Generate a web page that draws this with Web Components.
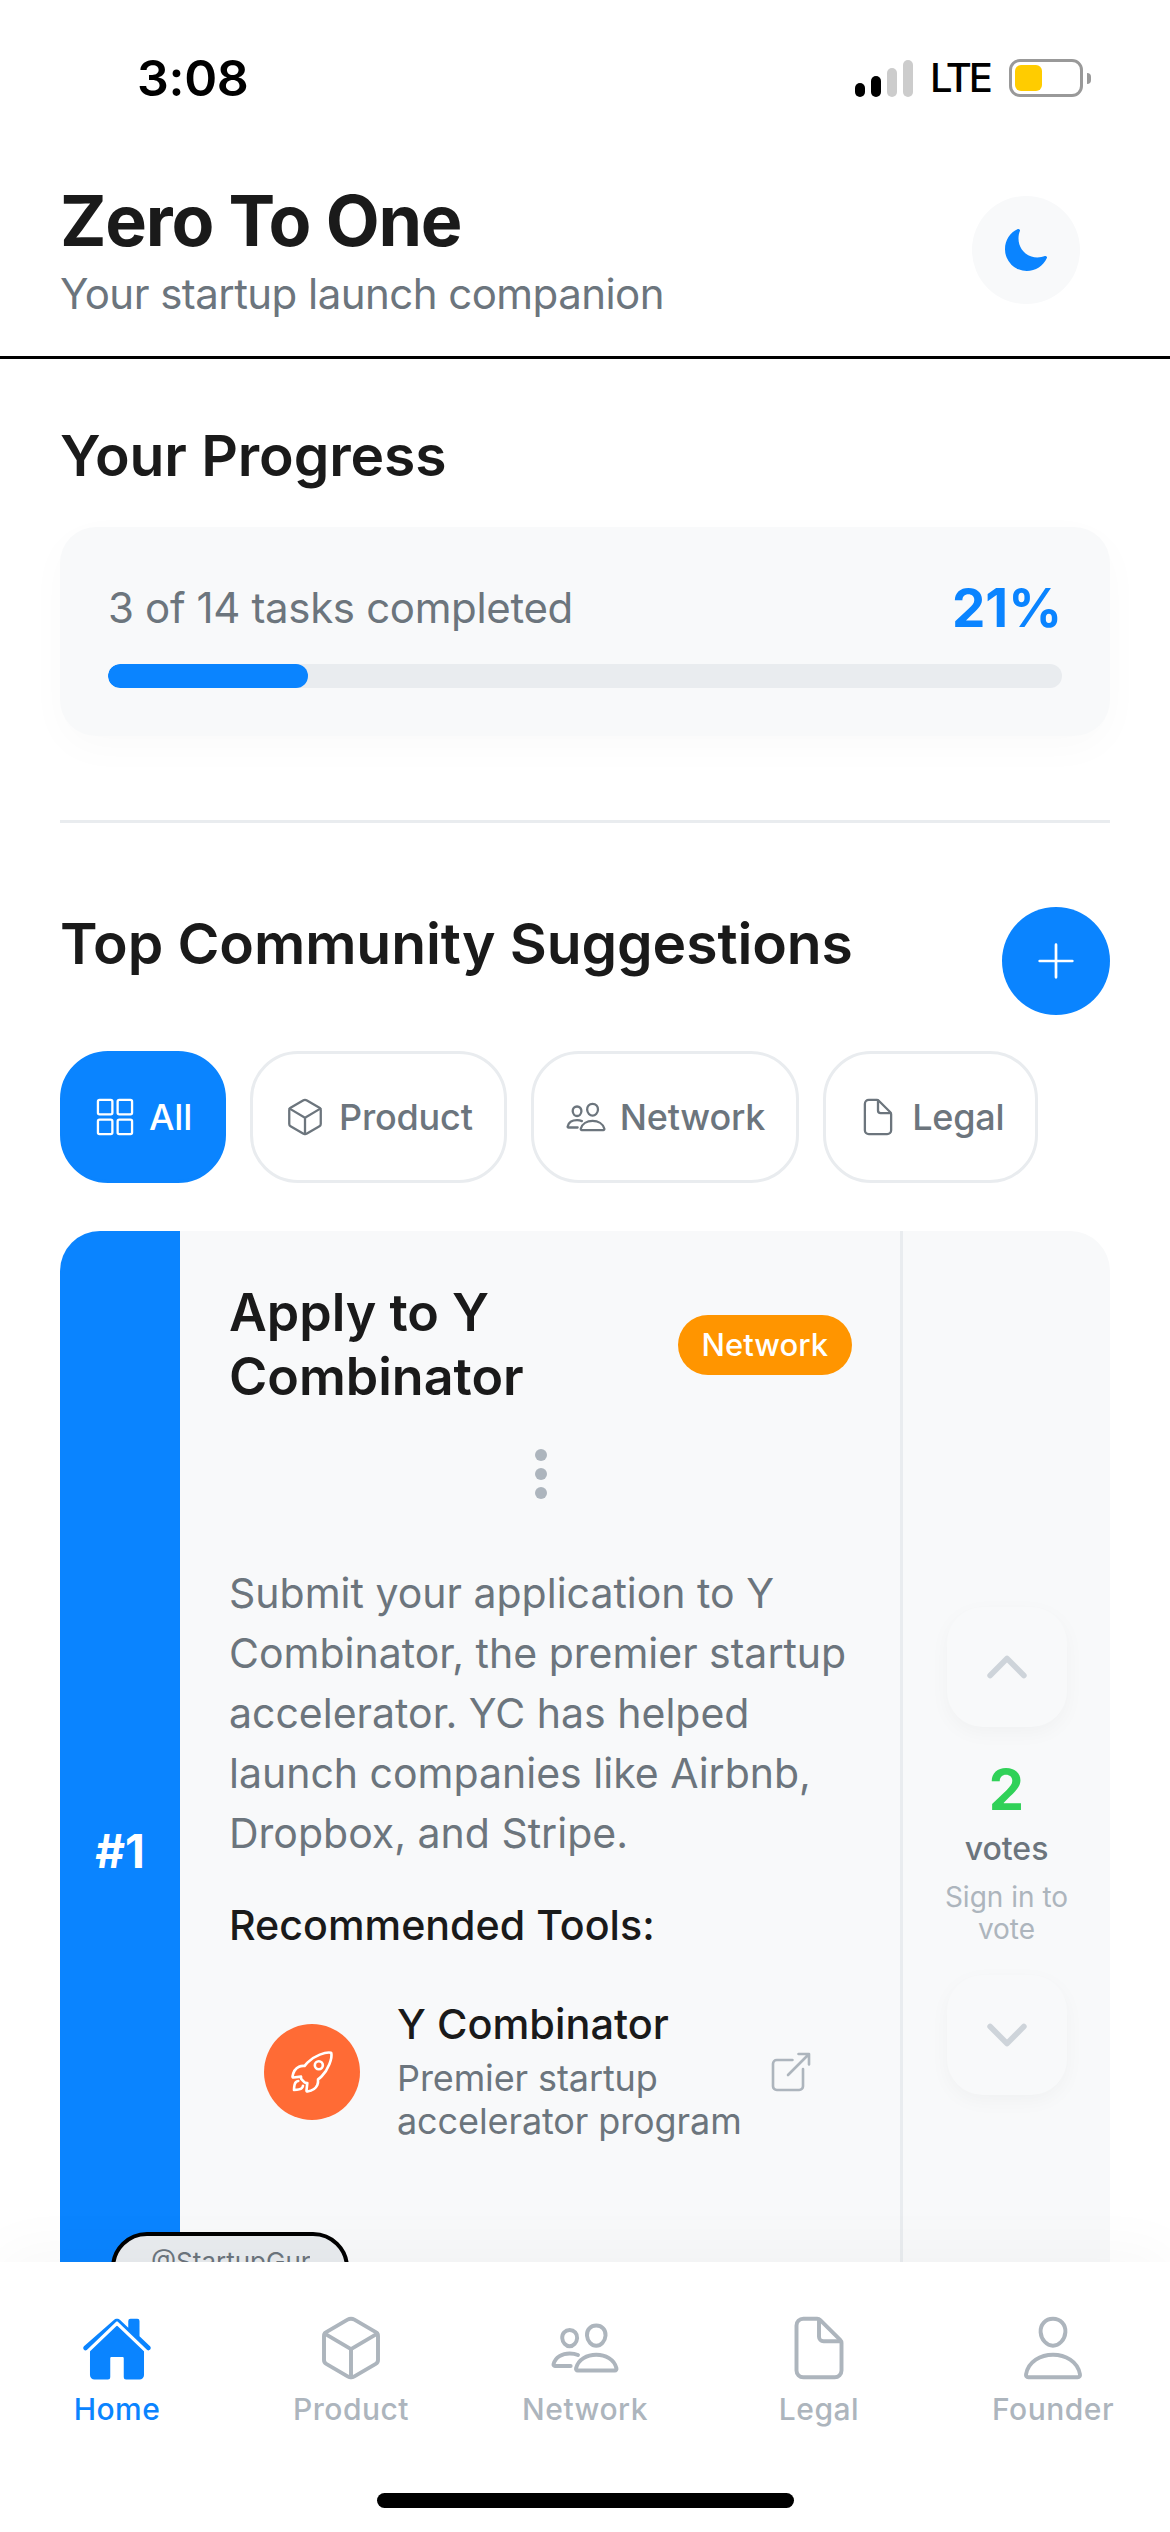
<!DOCTYPE html>
<html lang="en">
<head>
<meta charset="utf-8">
<title>Zero To One</title>
<style>
  html, body { margin: 0; padding: 0; background: #fff; }
  body { font-family: Inter, "Liberation Sans", sans-serif; color: #1a1a1a; }
</style>
</head>
<body>
<app-shell>
  <status-bar></status-bar>
  <app-header></app-header>
  <progress-panel slot="content" done="3" total="14"></progress-panel>
  <suggestions-head slot="content"></suggestions-head>
  <filter-row slot="content">
    <filter-chip active icon="grid">All</filter-chip>
    <filter-chip icon="cube">Product</filter-chip>
    <filter-chip icon="people">Network</filter-chip>
    <filter-chip icon="document">Legal</filter-chip>
  </filter-row>
  <suggestion-card slot="content" rank="#1" category="Network" votes="2" author="@StartupGuru">
    <span slot="title">Apply to Y Combinator</span>
    Submit your application to Y Combinator, the premier startup accelerator. YC has helped launch companies like Airbnb, Dropbox, and Stripe.
    <tool-row slot="tools" name="Y Combinator">Premier startup accelerator program</tool-row>
  </suggestion-card>
  <bottom-nav slot="nav">
    <nav-tab active icon="home">Home</nav-tab>
    <nav-tab icon="cube">Product</nav-tab>
    <nav-tab icon="people">Network</nav-tab>
    <nav-tab icon="document">Legal</nav-tab>
    <nav-tab icon="person">Founder</nav-tab>
  </bottom-nav>
</app-shell>

<script>
const ICONS = {
  moon: `<path fill="currentColor" stroke="none" d="M264 480A232 232 0 0132 248c0-94 54-178.28 137.61-214.67a16 16 0 0121.06 21.06C181.07 76.43 176 104.66 176 136c0 110.28 89.72 200 200 200 31.34 0 59.57-5.07 81.61-14.67a16 16 0 0121.06 21.06C442.28 426 358 480 264 480z"/>`,
  add: `<path d="M256 112v288M400 256H112"/>`,
  grid: `<rect x="48" y="48" width="176" height="176" rx="20"/><rect x="288" y="48" width="176" height="176" rx="20"/><rect x="48" y="288" width="176" height="176" rx="20"/><rect x="288" y="288" width="176" height="176" rx="20"/>`,
  cube: `<path d="M448 341.37V170.61A32 32 0 00432.11 143l-152-88.46a47.94 47.94 0 00-48.24 0L79.89 143A32 32 0 0064 170.61v170.76A32 32 0 0079.89 369l152 88.46a48 48 0 0048.24 0l152-88.46A32 32 0 00448 341.37z"/><path d="M69 153.99l187 110 187-110M256 463.99v-200"/>`,
  people: `<path d="M402 168c-2.93 40.67-33.1 72-66 72s-63.12-31.32-66-72c-3-42.31 26.37-72 66-72s69 30.46 66 72z"/><path d="M336 304c-65.17 0-127.84 32.37-143.54 95.41-2.08 8.34 3.15 16.59 11.72 16.59h263.65c8.57 0 13.77-8.25 11.72-16.59C463.85 335.36 401.18 304 336 304z"/><path d="M200 185.94c-2.34 32.48-26.72 58.06-53 58.06s-50.7-25.57-53-58.06C91.61 152.15 115.34 128 147 128s55.39 24.77 53 57.94z"/><path d="M206 306c-18.05-8.27-37.93-11.45-59-11.45-52 0-102.1 25.85-114.65 76.2-1.65 6.66 2.53 13.25 9.37 13.25H154"/>`,
  document: `<path d="M416 221.25V416a48 48 0 01-48 48H144a48 48 0 01-48-48V96a48 48 0 0148-48h98.75a32 32 0 0122.62 9.37l141.26 141.26a32 32 0 019.37 22.62z"/><path d="M256 56v120a32 32 0 0032 32h120"/>`,
  person: `<path d="M344 144c-3.92 52.87-44 96-88 96s-84.15-43.12-88-96c-4-55 35-96 88-96s92 42 88 96z"/><path d="M256 304c-87 0-175.3 48-191.64 138.6C62.39 453.52 68.57 464 80 464h352c11.44 0 17.62-10.48 15.65-21.4C431.3 352 343 304 256 304z"/>`,
  home: `<path fill="currentColor" stroke="none" d="M261.56 101.28a8 8 0 00-11.06 0L66.4 277.15a8 8 0 00-2.47 5.79L63.9 448a32 32 0 0032 32H192a16 16 0 0016-16V328a8 8 0 018-8h80a8 8 0 018 8v136a16 16 0 0016 16h96.06a32 32 0 0032-32V282.94a8 8 0 00-2.47-5.79z"/><path fill="currentColor" stroke="none" d="M490.91 244.15l-74.8-71.56V64a16 16 0 00-16-16h-48a16 16 0 00-16 16v48l-57.92-55.38C272.77 51.14 264.52 48 256 48c-8.49 0-16.72 3.14-22.14 8.63l-212.7 187.5c-6.22 6-7 15.87-1.34 22.37A16 16 0 0043 267.56L250.5 69.28a8 8 0 0111.06 0l207.52 198.28a16 16 0 0022.59-.44c6.14-6.36 5.63-16.86-.76-22.97z"/>`,
  rocket: `<path d="M461.81 53.81a4.4 4.4 0 00-3.3-3.39c-54.38-13.3-180 34.09-248.13 102.17a294.9 294.9 0 00-33.09 39.08c-21-1.9-42-.3-59.88 7.5-50.49 22.2-65.18 80.18-69.28 105.07a9 9 0 009.8 10.4l81.07-8.9a180.29 180.29 0 001.1 18.3 18.15 18.15 0 005.3 11.09l31.39 31.39a18.15 18.15 0 0011.1 5.3 179.91 179.91 0 0018.19 1.1l-8.89 81a9 9 0 0010.39 9.79c24.9-4 83-18.69 105.07-69.17 7.8-17.9 9.4-38.79 7.6-59.69a293.91 293.91 0 0039.19-33.09c68.38-68 115.47-190.86 102.37-247.95z"/><circle cx="328.85" cy="183.47" r="42.7"/><path d="M109.64 352a45.06 45.06 0 00-26.35 12.84C65.67 382.52 64 448 64 448s65.52-1.67 83.15-19.31A44.73 44.73 0 00160 402.32"/>`,
  open: `<path d="M384 224v184a40 40 0 01-40 40H104a40 40 0 01-40-40V168a40 40 0 0140-40h167.48M336 64h112v112M224 288L440 72"/>`,
  up: `<path d="M112 328l144-144 144 144"/>`,
  down: `<path d="M112 184l144 144 144-144"/>`,
};

class XIcon extends HTMLElement {
  connectedCallback() {
    const size = this.getAttribute("size") || 36;
    const stroke = this.getAttribute("stroke") || 32;
    this.attachShadow({ mode: "open" }).innerHTML = `
      <style>
        :host { display: block; width: ${size}px; height: ${size}px; flex: none; }
        svg { display: block; width: 100%; height: 100%; fill: none; stroke: currentColor;
              stroke-width: ${stroke}; stroke-linecap: round; stroke-linejoin: round; }
      </style>
      <svg viewBox="0 0 512 512">${ICONS[this.getAttribute("name")]}</svg>`;
  }
}

const shellTemplate = document.createElement("template");
shellTemplate.innerHTML = `
  <style>
    :host { display: flex; flex-direction: column; width: 1170px; height: 2532px; overflow: hidden; background: #fff; }
    main { flex: 1; min-height: 0; overflow: hidden; padding: 63px 60px 0; display: flex; flex-direction: column; }
    ::slotted(bottom-nav) { flex: none; }
  </style>
  <slot></slot>
  <main><slot name="content"></slot></main>
  <slot name="nav"></slot>
`;
class AppShell extends HTMLElement {
  constructor() {
    super();
    this.attachShadow({ mode: "open" }).appendChild(shellTemplate.content.cloneNode(true));
  }
}

const statusTemplate = document.createElement("template");
statusTemplate.innerHTML = `
  <style>
    :host { display: flex; align-items: center; justify-content: space-between; padding: 48px 79px 2px 137px; height: 60px; color: #000; }
    .time { font: 600 50px/60px Inter, sans-serif; letter-spacing: -.3px; }
    .right { display: flex; align-items: center; gap: 19px; }
    .signal { display: flex; align-items: flex-end; gap: 6px; height: 37px; margin: 1px -2px 0 0; }
    .signal i { display: block; width: 10px; border-radius: 5px; background: #000; }
    .signal i.off { background: #ccc; }
    .lte { font: 500 40px/38px Inter, sans-serif; letter-spacing: -3px; }
    .batt { display: flex; align-items: center; gap: 4px; }
    .shell { box-sizing: border-box; width: 74px; height: 38px; border: 3px solid #999; border-radius: 11px; padding: 3px; }
    .fill { width: 27px; height: 26px; background: #fc0; border-radius: 6px; }
    .nub { width: 4px; height: 11px; background: #999; border-radius: 0 4px 4px 0; }
  </style>
  <span class="time">3:08</span>
  <div class="right">
    <div class="signal"><i style="height:14px"></i><i style="height:21px"></i><i class="off" style="height:29px"></i><i class="off" style="height:37px"></i></div>
    <span class="lte">LTE</span>
    <div class="batt"><div class="shell"><div class="fill"></div></div><div class="nub"></div></div>
  </div>
`;
class StatusBar extends HTMLElement {
  constructor() {
    super();
    this.attachShadow({ mode: "open" }).appendChild(statusTemplate.content.cloneNode(true));
  }
}

const headerTemplate = document.createElement("template");
headerTemplate.innerHTML = `
  <style>
    :host { display: flex; align-items: center; justify-content: space-between; padding: 71px 90px 37px 60px; border-bottom: 3px solid #000; }
    h1 { margin: 0; font: 700 70px/80px Inter, sans-serif; color: #1a1a1a; letter-spacing: -1.2px; }
    p { margin: 8px 0 0; font: 400 42px/50px Inter, sans-serif; color: #6c757d; letter-spacing: -.55px; }
    .moon { width: 108px; height: 108px; border-radius: 50%; background: #f8f9fa; display: flex; align-items: center; justify-content: center; color: #0a84ff; }
  </style>
  <div>
    <h1>Zero To One</h1>
    <p>Your startup launch companion</p>
  </div>
  <div class="moon"><x-icon name="moon" size="48"></x-icon></div>
`;
class AppHeader extends HTMLElement {
  constructor() {
    super();
    this.attachShadow({ mode: "open" }).appendChild(headerTemplate.content.cloneNode(true));
  }
}

const progressTemplate = document.createElement("template");
progressTemplate.innerHTML = `
  <style>
    :host { display: block; flex: none; }
    h2 { margin: 0 0 37px; font: 600 57px/68px Inter, sans-serif; color: #1a1a1a; letter-spacing: -.1px; }
    .card { background: #f8f9fa; border-radius: 36px; padding: 48px; box-shadow: 0 12px 40px rgba(0,0,0,.025); }
    .row { display: flex; align-items: center; justify-content: space-between; margin-bottom: 21px; height: 68px; }
    .label { font: 400 42px/48px Inter, sans-serif; color: #6c757d; letter-spacing: -.35px; padding-bottom: 3px; }
    .pct { font: 700 53px/68px Inter, sans-serif; color: #0a84ff; padding-bottom: 2px; }
    .track { height: 24px; border-radius: 12px; background: #e9ecef; overflow: hidden; }
    .bar { height: 100%; border-radius: 12px; background: #0a84ff; }
    hr { border: 0; height: 3px; background: #e9ecef; margin: 84px 0; }
  </style>
  <h2>Your Progress</h2>
  <div class="card">
    <div class="row"><span class="label"></span><span class="pct"></span></div>
    <div class="track"><div class="bar"></div></div>
  </div>
  <hr>
`;
class ProgressPanel extends HTMLElement {
  constructor() {
    super();
    this.attachShadow({ mode: "open" }).appendChild(progressTemplate.content.cloneNode(true));
  }
  connectedCallback() {
    const done = +this.getAttribute("done");
    const total = +this.getAttribute("total");
    const pct = Math.round((done / total) * 100);
    this.shadowRoot.querySelector(".label").textContent = `${done} of ${total} tasks completed`;
    this.shadowRoot.querySelector(".pct").textContent = `${pct}%`;
    this.shadowRoot.querySelector(".bar").style.width = `${pct}%`;
  }
}

const headTemplate = document.createElement("template");
headTemplate.innerHTML = `
  <style>
    :host { display: flex; flex: none; align-items: flex-start; justify-content: space-between; margin-bottom: 36px; }
    h2 { margin: 3px 0 0; font: 600 57px/68px Inter, sans-serif; color: #1a1a1a; letter-spacing: -.1px; }
    .add { width: 108px; height: 108px; border-radius: 50%; background: #0a84ff; color: #fff; display: flex; align-items: center; justify-content: center; }
  </style>
  <h2>Top Community Suggestions</h2>
  <div class="add"><x-icon name="add" size="58" stroke="24"></x-icon></div>
`;
class SuggestionsHead extends HTMLElement {
  constructor() {
    super();
    this.attachShadow({ mode: "open" }).appendChild(headTemplate.content.cloneNode(true));
  }
}

const filterRowTemplate = document.createElement("template");
filterRowTemplate.innerHTML = `
  <style>:host { display: flex; flex: none; gap: 24px; margin-bottom: 48px; }</style>
  <slot></slot>
`;
class FilterRow extends HTMLElement {
  constructor() {
    super();
    this.attachShadow({ mode: "open" }).appendChild(filterRowTemplate.content.cloneNode(true));
  }
}

class FilterChip extends HTMLElement {
  connectedCallback() {
    const active = this.hasAttribute("active");
    this.attachShadow({ mode: "open" }).innerHTML = `
      <style>
        :host { box-sizing: border-box; display: flex; align-items: center; gap: 13px; height: 132px; padding: 0 31px;
                border-radius: 48px; font: 500 36px/44px Inter, sans-serif; letter-spacing: -.2px;
                background: ${active ? "#0a84ff" : "#fff"}; color: ${active ? "#fff" : "#6c757d"};
                border: 3px solid ${active ? "#0a84ff" : "#e9ecef"}; }
      </style>
      <x-icon name="${this.getAttribute("icon")}" size="42" stroke="28"></x-icon>
      <slot></slot>`;
  }
}

class VotePanel extends HTMLElement {
  connectedCallback() {
    this.attachShadow({ mode: "open" }).innerHTML = `
      <style>
        :host { box-sizing: border-box; flex: none; width: 210px; border-left: 3px solid #e9ecef; display: flex; flex-direction: column; align-items: center; justify-content: center; }
        .btn { width: 120px; height: 120px; border-radius: 36px; background: #f8f9fa; box-shadow: 0 6px 20px rgba(0,0,0,.035); color: #ced4da; display: flex; align-items: center; justify-content: center; }
        .num { margin-top: 29px; font: 700 56px/68px Inter, sans-serif; color: #30d158; }
        .lbl { margin-top: 5px; font: 500 32px/40px Inter, sans-serif; color: #6c757d; }
        .hint { margin: 12px 0 30px; width: 170px; text-align: center; font: 400 28px/32px Inter, sans-serif; color: #adb5bd; }
      </style>
      <div class="btn"><x-icon name="up" size="60" stroke="48"></x-icon></div>
      <div class="num">${this.getAttribute("votes")}</div>
      <div class="lbl">votes</div>
      <div class="hint">Sign in to vote</div>
      <div class="btn"><x-icon name="down" size="60" stroke="48"></x-icon></div>`;
  }
}

const toolTemplate = document.createElement("template");
toolTemplate.innerHTML = `
  <style>
    :host { display: flex; align-items: center; gap: 15px; padding: 0 37px 0 35px; }
    .logo { flex: none; width: 96px; height: 96px; margin-right: 22px; border-radius: 50%; background: #ff6b35; color: #fff; display: flex; align-items: center; justify-content: center; }
    .text { flex: 1; min-width: 0; }
    .name { font: 500 41.5px/48px Inter, sans-serif; color: #1a1a1a; }
    .desc { margin-top: 9px; font: 400 36px/43px Inter, sans-serif; color: #6c757d; letter-spacing: -.1px; }
    x-icon.ext { color: #adb5bd; }
  </style>
  <div class="logo"><x-icon name="rocket" size="48" stroke="28"></x-icon></div>
  <div class="text"><div class="name"></div><div class="desc"><slot></slot></div></div>
  <x-icon class="ext" name="open" size="48" stroke="28"></x-icon>
`;
class ToolRow extends HTMLElement {
  constructor() {
    super();
    this.attachShadow({ mode: "open" }).appendChild(toolTemplate.content.cloneNode(true));
  }
  connectedCallback() {
    this.shadowRoot.querySelector(".name").textContent = this.getAttribute("name");
  }
}

class SuggestionCard extends HTMLElement {
  connectedCallback() {
    this.attachShadow({ mode: "open" }).innerHTML = `
      <style>
        :host { position: relative; display: flex; flex: none; height: 1240px; border-radius: 40px; overflow: hidden; background: #f8f9fa; }
        .rail { flex: none; width: 120px; background: #0a84ff; color: #fff; display: flex; align-items: center; justify-content: center; font: 700 46px/52px Inter, sans-serif; }
        .body { flex: 1; min-width: 0; padding: 50px 48px 0 49px; }
        .top { display: flex; align-items: center; justify-content: space-between; gap: 32px; }
        h3 { margin: 0; font: 600 52px/64px Inter, sans-serif; color: #1a1a1a; }
        .badge { flex: none; height: 60px; padding: 0 24px; border-radius: 30px; background: #ff9500; color: #fff; display: flex; align-items: center; font: 500 31px/36px Inter, sans-serif; }
        .more { display: flex; flex-direction: column; align-items: center; gap: 7px; padding: 40px 0 64px; }
        .more i { display: block; width: 12px; height: 12px; border-radius: 50%; background: #adb5bd; }
        .desc { font: 400 41px/60px Inter, sans-serif; color: #6c757d; }
        h4 { margin: 38px 0 51px; font: 500 41.2px/48px Inter, sans-serif; color: #1a1a1a; }
        .author { position: absolute; left: 51px; top: 1001px; box-sizing: border-box; width: 238px; height: 76px; padding: 10px 0 0 36px; border: 4px solid #000; border-radius: 36px; background: #e9ecef; color: #6c757d; font: 400 26px/32px Inter, sans-serif; }
        .author span { display: block; width: 159px; overflow: hidden; white-space: nowrap; }
      </style>
      <div class="rail">${this.getAttribute("rank")}</div>
      <div class="body">
        <div class="top"><h3><slot name="title"></slot></h3><span class="badge">${this.getAttribute("category")}</span></div>
        <div class="more"><i></i><i></i><i></i></div>
        <div class="desc"><slot></slot></div>
        <h4>Recommended Tools:</h4>
        <slot name="tools"></slot>
      </div>
      <vote-panel votes="${this.getAttribute("votes")}"></vote-panel>
      <div class="author"><span>${this.getAttribute("author")}</span></div>`;
  }
}

const navTemplate = document.createElement("template");
navTemplate.innerHTML = `
  <style>
    :host { position: relative; display: flex; flex-direction: column; height: 270px; box-sizing: border-box; background: #fff; box-shadow: 0 -8px 60px rgba(0,0,0,.035); }
    .tabs { display: grid; grid-template-columns: repeat(5, 1fr); padding-top: 50px; }
    .home-bar { width: 417px; height: 15px; border-radius: 8px; background: #000; margin: auto auto 24px; }
  </style>
  <div class="tabs"><slot></slot></div>
  <div class="home-bar"></div>
`;
class BottomNav extends HTMLElement {
  constructor() {
    super();
    this.attachShadow({ mode: "open" }).appendChild(navTemplate.content.cloneNode(true));
  }
}

class NavTab extends HTMLElement {
  connectedCallback() {
    const active = this.hasAttribute("active");
    this.attachShadow({ mode: "open" }).innerHTML = `
      <style>
        :host { display: flex; flex-direction: column; align-items: center; gap: 7px; color: ${active ? "#0a84ff" : "#adb5bd"};
                font: 500 30px/36px Inter, sans-serif; letter-spacing: .5px; }
      </style>
      <x-icon name="${this.getAttribute("icon")}" size="72" stroke="28"></x-icon>
      <slot></slot>`;
  }
}

customElements.define("x-icon", XIcon);
customElements.define("app-shell", AppShell);
customElements.define("status-bar", StatusBar);
customElements.define("app-header", AppHeader);
customElements.define("progress-panel", ProgressPanel);
customElements.define("suggestions-head", SuggestionsHead);
customElements.define("filter-row", FilterRow);
customElements.define("filter-chip", FilterChip);
customElements.define("vote-panel", VotePanel);
customElements.define("tool-row", ToolRow);
customElements.define("suggestion-card", SuggestionCard);
customElements.define("bottom-nav", BottomNav);
customElements.define("nav-tab", NavTab);
</script>
</body>
</html>
